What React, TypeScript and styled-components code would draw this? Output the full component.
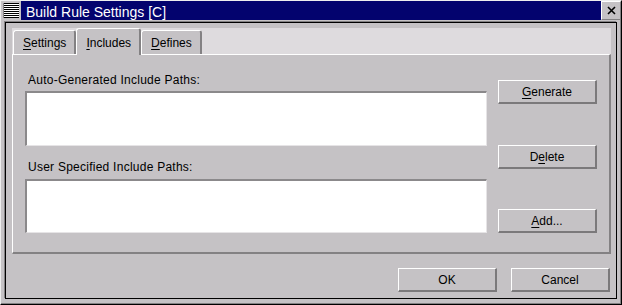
import React from 'react';
import styled, { createGlobalStyle } from 'styled-components';

const GlobalStyle = createGlobalStyle`
  html, body {
    margin: 0;
    padding: 0;
    background: #c5c2c5;
  }
  body {
    font-family: "Liberation Sans", Arial, sans-serif;
    font-size: 12px;
    color: #000;
  }
`;

const Window = styled.div`
  width: 622px;
  height: 305px;
  box-sizing: border-box;
  display: flex;
  flex-direction: column;
  background: #c5c2c5;
  border-top: 1px solid #eeeeee;
  border-left: 1px solid #eeeeee;
  border-right: 1px solid #000;
  border-bottom: 1px solid #000;
  box-shadow: inset -1px -1px 0 #838183;
`;

const TitleBar = styled.div`
  display: flex;
  height: 19px;
`;

const MenuIcon = styled.span`
  width: 20px;
  height: 19px;
  box-sizing: border-box;
  padding: 2px;
  display: flex;
  span {
    flex: 1;
    border-left: 1px solid #838183;
    background: repeating-linear-gradient(#000 0 1px, #fff 1px 2px);
  }
`;

const Caption = styled.div`
  flex: 1;
  background: #03036e;
  color: #fff;
  font-size: 14px;
  line-height: 16px;
  padding: 3px 0 0 5px;
  box-sizing: border-box;
  white-space: nowrap;
`;

const CloseButton = styled.div`
  width: 20px;
  height: 19px;
  box-sizing: border-box;
  border-top: 1px solid #fff;
  border-left: 1px solid #fff;
  border-right: 1px solid #838183;
  border-bottom: 1px solid #838183;
  display: flex;
  align-items: center;
  justify-content: center;
`;

const Frame = styled.div`
  flex: 1;
  margin: 2px 4px 5px 4px;
  border: 1px solid #000;
  box-shadow: -1px -1px 0 #838183;
  display: flex;
  flex-direction: column;
  padding: 5px 5px 6px 6px;
  min-height: 0;
`;

const TabBar = styled.div`
  display: flex;
  align-items: flex-end;
  height: 26px;
  padding-left: 1px;
  background: #dedbde;
`;

const Tab = styled.div<{ $active?: boolean }>`
  position: relative;
  z-index: 1;
  box-sizing: border-box;
  height: ${p => (p.$active ? '27px' : '24px')};
  margin-bottom: ${p => (p.$active ? '-1px' : '0')};
  padding: ${p => (p.$active ? '7px' : '5px')} 8px 0 9px;
  line-height: 14px;
  background: #c5c2c5;
  border-top: 1px solid #fff;
  border-left: 1px solid #fff;
  border-right: 2px solid #838183;
  border-radius: 3px 3px 0 0;
  white-space: nowrap;
`;

const Mn = styled.span`
  text-decoration: underline;
  text-underline-offset: 2px;
`;

const Pane = styled.div`
  height: 201px;
  box-sizing: border-box;
  border-top: 1px solid #fff;
  border-left: 1px solid #fff;
  border-right: 2px solid #838183;
  border-bottom: 2px solid #838183;
  display: flex;
  gap: 11px;
  padding: 0 11px 0 12px;
`;

const Lists = styled.div`
  width: 462px;
  display: flex;
  flex-direction: column;
  padding-top: 18px;
`;

const Label = styled.div<{ $top?: number }>`
  line-height: 14px;
  padding-left: 3px;
  margin-top: ${p => p.$top ?? 0}px;
  letter-spacing: 0.25px;
`;

const ListBox = styled.div<{ $h: number; $gap: number }>`
  height: ${p => p.$h}px;
  margin-top: ${p => p.$gap}px;
  box-sizing: border-box;
  background: #fff;
  border-top: 2px solid #8b898b;
  border-left: 2px solid #8b898b;
  border-right: 1px solid #e6e4e6;
  border-bottom: 1px solid #e6e4e6;
`;

const ButtonColumn = styled.div`
  display: flex;
  flex-direction: column;
  padding-top: 25px;
`;

const Button = styled.div<{ $top?: number }>`
  width: 99px;
  height: 24px;
  box-sizing: border-box;
  margin-top: ${p => p.$top ?? 0}px;
  border-top: 1px solid #fff;
  border-left: 1px solid #fff;
  border-right: 2px solid #7b797b;
  border-bottom: 2px solid #7b797b;
  display: flex;
  align-items: center;
  justify-content: center;
  line-height: 14px;
  background: #c5c2c5;
`;

const Footer = styled.div`
  display: flex;
  justify-content: flex-end;
  gap: 14px;
  margin-top: 14px;
  padding-right: 1px;
`;

export default function App() {
  return (
    <>
      <GlobalStyle />
      <Window>
        <TitleBar>
          <MenuIcon><span /></MenuIcon>
          <Caption>Build Rule Settings [C]</Caption>
          <CloseButton>
            <svg width="9" height="9" viewBox="0 0 9 9">
              <path d="M1 1 L8 8 M8 1 L1 8" stroke="#000" strokeWidth="1.6" />
            </svg>
          </CloseButton>
        </TitleBar>
        <Frame>
          <TabBar>
            <Tab><Mn>S</Mn>ettings</Tab>
            <Tab $active><Mn>I</Mn>ncludes</Tab>
            <Tab><Mn>D</Mn>efines</Tab>
          </TabBar>
          <Pane>
            <Lists>
              <Label>Auto-Generated Include Paths:</Label>
              <ListBox $h={55} $gap={4} />
              <Label $top={14}>User Specified Include Paths:</Label>
              <ListBox $h={54} $gap={5} />
            </Lists>
            <ButtonColumn>
              <Button><Mn>G</Mn>enerate</Button>
              <Button $top={41}>D<Mn>e</Mn>lete</Button>
              <Button $top={40}><Mn>A</Mn>dd...</Button>
            </ButtonColumn>
          </Pane>
          <Footer>
            <Button>OK</Button>
            <Button>Cancel</Button>
          </Footer>
        </Frame>
      </Window>
    </>
  );
}
